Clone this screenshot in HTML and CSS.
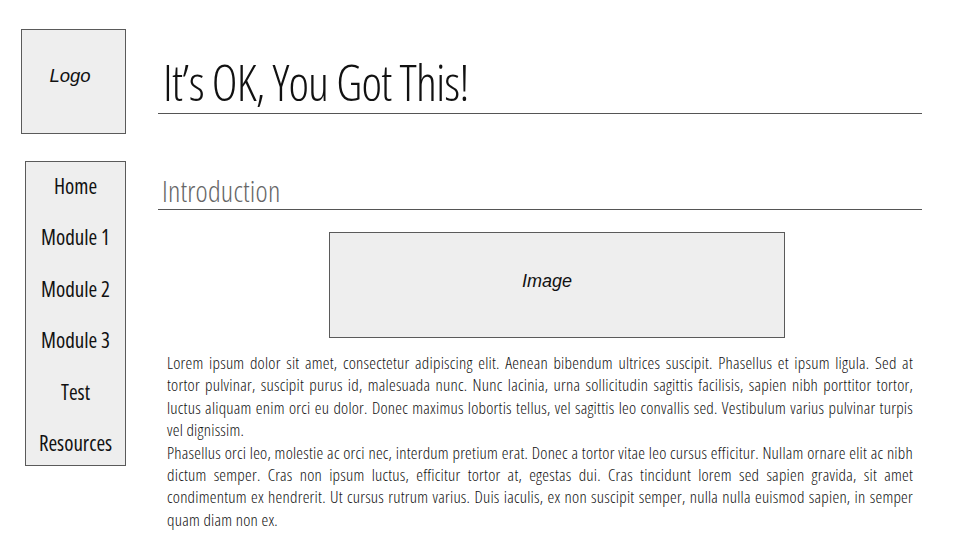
FILE: index.html
```html
<!DOCTYPE html>
<html lang="en">
<head>
<meta charset="utf-8">
<title>It’s OK, You Got This!</title>
<link rel="stylesheet" href="styles.css">
</head>
<body>
<div class="page">
  <aside class="side">
    <div class="logo"><span>Logo</span></div>
    <nav class="nav">
      <a class="nav-item">Home</a>
      <a class="nav-item">Module 1</a>
      <a class="nav-item">Module 2</a>
      <a class="nav-item">Module 3</a>
      <a class="nav-item">Test</a>
      <a class="nav-item">Resources</a>
    </nav>
  </aside>
  <main class="main">
    <h1 class="title">It’s OK, You Got This!</h1>
    <h2 class="section-title">Introduction</h2>
    <div class="image"><span>Image</span></div>
    <div class="text">
      <p>Lorem ipsum dolor sit amet, consectetur adipiscing elit. Aenean bibendum ultrices suscipit. Phasellus et ipsum ligula. Sed at tortor pulvinar, suscipit purus id, malesuada nunc. Nunc lacinia, urna sollicitudin sagittis facilisis, sapien nibh porttitor tortor, luctus aliquam enim orci eu dolor. Donec maximus lobortis tellus, vel sagittis leo convallis sed. Vestibulum varius pulvinar turpis vel dignissim.</p>
      <p>Phasellus orci leo, molestie ac orci nec, interdum pretium erat. Donec a tortor vitae leo cursus efficitur. Nullam ornare elit ac nibh dictum semper. Cras non ipsum luctus, efficitur tortor at, egestas dui. Cras tincidunt lorem sed sapien gravida, sit amet condimentum ex hendrerit. Ut cursus rutrum varius. Duis iaculis, ex non suscipit semper, nulla nulla euismod sapien, in semper quam diam non ex.</p>
    </div>
  </main>
</div>
</body>
</html>
```
FILE: styles.css
```css
* { box-sizing: border-box; }
html, body { margin: 0; padding: 0; background: #fff; }
body {
  font-family: "Open Sans", "Liberation Sans", sans-serif;
  font-stretch: 75%;
  font-weight: 300;
  color: #111;
}
.page {
  display: flex;
  width: 960px;
  height: 540px;
}
.side {
  width: 158px;
  flex: none;
  padding-top: 29px;
}
.logo {
  margin-left: 21px;
  width: 105px;
  height: 105px;
  border: 1px solid #5a5a5a;
  background: #eeeeee;
  display: flex;
  align-items: center;
  justify-content: center;
}
.logo span, .image span {
  font-family: "Liberation Sans", Arial, sans-serif;
  font-stretch: normal;
  font-style: italic;
  font-weight: 400;
  color: #111;
}
.logo span { font-size: 18.5px; margin-left: -7px; margin-top: -12px; }
.nav {
  margin-top: 27px;
  margin-left: 25px;
  width: 101px;
  height: 305px;
  border: 1px solid #5a5a5a;
  background: #eeeeee;
}
.nav-item {
  display: block;
  height: 51.4px;
  line-height: 48px;
  text-align: center;
  font-size: 21px;
  font-weight: 400;
  color: #111;
  text-decoration: none;
}
.main {
  width: 764px;
  flex: none;
  padding-top: 58px;
}
.title {
  margin: 0;
  padding: 0 0 7px 5px;
  font-size: 49px;
  line-height: 48px;
  font-weight: 300;
  letter-spacing: -0.9px;
  color: #111;
  border-bottom: 1px solid #555;
}
.section-title {
  margin: 61px 0 0 0;
  padding: 0 0 3px 4px;
  font-size: 29px;
  line-height: 31px;
  font-weight: 300;
  letter-spacing: 0.2px;
  color: #666;
  border-bottom: 1px solid #555;
}
.image {
  margin: 22px 0 0 171px;
  width: 456px;
  height: 106px;
  border: 1px solid #5a5a5a;
  background: #eeeeee;
  display: flex;
  align-items: center;
  justify-content: center;
}
.image span { font-size: 18px; margin-left: -20px; margin-top: -8px; }
.text {
  margin-top: 14px;
  padding: 0 9px;
}
.text p {
  margin: 0;
  font-size: 17px;
  line-height: 22.4px;
  letter-spacing: 0.235px;
  text-align: justify;
  color: #111;
  font-weight: 350;
}
```
